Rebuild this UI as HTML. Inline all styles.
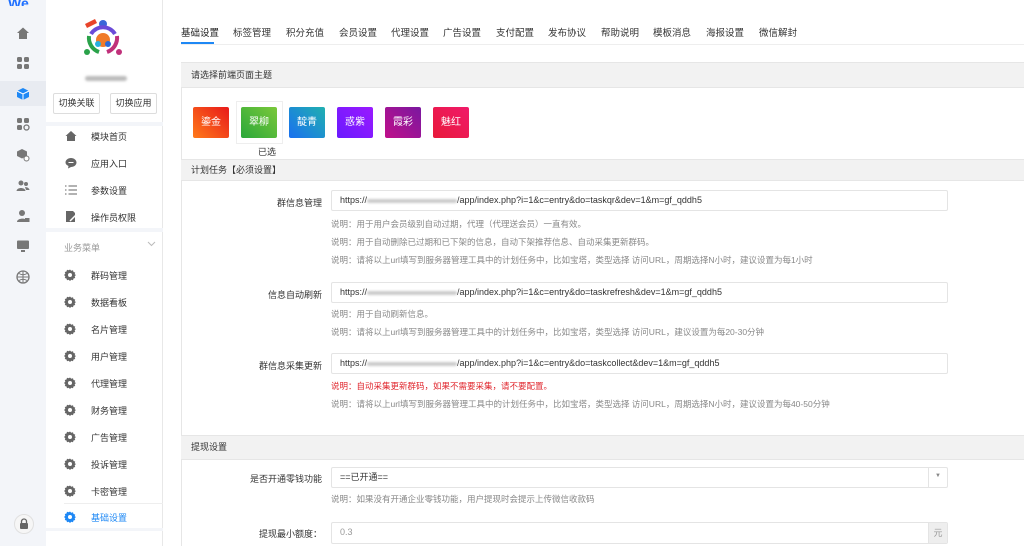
<!DOCTYPE html>
<html><head><meta charset="utf-8"><style>
*{margin:0;padding:0;box-sizing:border-box}
body{width:1024px;height:546px;overflow:hidden;background:#fff;font-family:"Liberation Sans","Noto Sans CJK SC",sans-serif;font-size:9px;color:#333;position:relative}
.a{position:absolute}
.rail{left:0;top:0;width:46px;height:546px;background:#f3f5f9}
.ri{position:absolute;left:16px;width:14px;height:14px}
.side{left:46px;top:0;width:117px;height:546px;background:#fff;border-right:1px solid #e8e8e8}
.mi{position:absolute;left:91px;font-size:9px;color:#333;white-space:nowrap}
.gear{position:absolute;left:64px;width:12px;height:12px}
.btn{position:absolute;top:93px;height:21px;width:47px;border:1px solid #ddd;border-radius:2px;font-size:9px;line-height:19px;text-align:center;color:#333}
.tab{position:absolute;top:25px;font-size:9.5px;color:#333;white-space:nowrap}
.hd{position:absolute;left:181px;right:0;background:#f2f2f2;border-top:1px solid #e6e6e6;border-bottom:1px solid #e6e6e6;padding-left:10px;font-size:9px;color:#333}
.th{position:absolute;top:107px;width:36px;height:31px;color:#fff;font-size:10px;line-height:31px;text-align:center;border-radius:2px}
.lab{position:absolute;right:702px;font-size:9px;color:#333;white-space:nowrap}
.inp{position:absolute;left:331px;width:617px;height:21px;border:1px solid #e4e4e4;border-radius:2px;padding-left:8px;line-height:19px;font-size:9px;color:#333;white-space:nowrap}
.blur{display:inline-block;width:90px;height:4px;background:#ccc;vertical-align:middle;border-radius:2px;filter:blur(1px)}
.nt{position:absolute;left:331px;font-size:8.5px;color:#888;white-space:nowrap}
</style></head><body>
<div class="a rail"></div>
<div class="a" style="left:0;top:0;width:40px;height:6px;overflow:hidden"><div style="margin-top:-5px;color:#1e6fff;font-weight:bold;font-size:14px;padding-left:8px">We</div></div>
<div class="a" style="left:0;top:81px;width:46px;height:25px;background:#e8ebf1"></div>
<svg class="ri" style="top:26px" viewBox="0 0 14 14"><path d="M1 7L7 1.5 13 7H11V13H3V7Z" fill="#777"/></svg>
<svg class="ri" style="top:56px" viewBox="0 0 14 14"><rect x="1" y="1" width="5" height="5" rx="1.5" fill="#777"/><rect x="8" y="1" width="5" height="5" rx="1.5" fill="#777"/><rect x="1" y="8" width="5" height="5" rx="1.5" fill="#777"/><rect x="8" y="8" width="5" height="5" rx="1.5" fill="#777"/></svg>
<svg class="ri" style="top:87px" viewBox="0 0 14 14"><path d="M7 1L13 4V10L7 13 1 10V4Z" fill="#1e88f5"/><path d="M1 4L7 7 13 4M7 7V13" stroke="#fff" stroke-width="1" fill="none"/></svg>
<svg class="ri" style="top:117px" viewBox="0 0 14 14"><rect x="1" y="1" width="5" height="5" rx="1.5" fill="#777"/><rect x="8" y="1" width="5" height="5" rx="1.5" fill="#777"/><rect x="1" y="8" width="5" height="5" rx="1.5" fill="#777"/><circle cx="10.5" cy="10.5" r="2.5" fill="none" stroke="#777" stroke-width="1.3"/></svg>
<svg class="ri" style="top:148px" viewBox="0 0 14 14"><path d="M6 1L11 3.5V8L6 10.5 1 8V3.5Z" fill="#777"/><circle cx="10.5" cy="10.5" r="2.5" fill="#fff" stroke="#777"/></svg>
<svg class="ri" style="top:179px" viewBox="0 0 14 14"><circle cx="5" cy="4" r="2.5" fill="#777"/><path d="M0.5 12C1 8 9 8 9.5 12Z" fill="#777"/><circle cx="10" cy="5" r="2" fill="#777"/><path d="M9 8C12 8 13.5 10 13.5 11H10Z" fill="#777"/></svg>
<svg class="ri" style="top:209px" viewBox="0 0 14 14"><circle cx="6" cy="4" r="3" fill="#777"/><path d="M1 13C1 9 10 9 10 11V13Z" fill="#777"/><rect x="9" y="9" width="4.5" height="4" fill="#777"/></svg>
<svg class="ri" style="top:239px" viewBox="0 0 14 14"><rect x="1" y="1.5" width="12" height="8.5" rx="1" fill="#777"/><rect x="5" y="11" width="4" height="2" fill="#777"/></svg>
<svg class="ri" style="top:270px" viewBox="0 0 14 14"><circle cx="7" cy="7" r="6" fill="none" stroke="#777" stroke-width="1.3"/><path d="M1 7H13M7 1V13M3 3.5Q7 6 11 3.5M3 10.5Q7 8 11 10.5" stroke="#777" fill="none"/></svg>
<div class="a" style="left:14px;top:514px;width:20px;height:20px;border-radius:50%;border:1px solid #e0e0e0;background:#f6f6f6"></div>
<svg class="a" style="left:19px;top:518px" width="10" height="11" viewBox="0 0 10 11"><path d="M2.5 5V3.5a2.5 2.5 0 0 1 5 0V5" stroke="#666" stroke-width="1.3" fill="none"/><rect x="1" y="5" width="8" height="6" rx="1" fill="#666"/></svg>

<div class="a side"></div>
<div class="a" style="left:46px;top:122px;width:117px;height:4px;background:#f3f5f9"></div>
<div class="a" style="left:46px;top:228px;width:117px;height:4px;background:#f3f5f9"></div>
<svg class="a" style="left:81px;top:18px" width="44" height="42" viewBox="0 0 44 42"><path d="M4 6L14 1 16 5 6 10Z" fill="#e8442a"/><circle cx="22" cy="6" r="4" fill="#3a66d8"/><path d="M10 16A14 14 0 0 1 34 16" stroke="#6b4bd8" stroke-width="4" fill="none"/><path d="M8 18A15 15 0 0 0 18 34" stroke="#2aa24a" stroke-width="4" fill="none"/><path d="M36 18A15 15 0 0 1 26 34" stroke="#c0307a" stroke-width="4" fill="none"/><circle cx="22" cy="22" r="7" fill="#f07a2a"/><circle cx="17" cy="26" r="3" fill="#28b0e0"/><circle cx="27" cy="26" r="3" fill="#2a6ad8"/><circle cx="6" cy="34" r="3" fill="#2aa24a"/><circle cx="38" cy="34" r="3" fill="#c0307a"/></svg>
<div class="a" style="left:85px;top:76px;width:42px;height:5px;background:#bbb;border-radius:3px;filter:blur(1.2px)"></div>
<div class="btn" style="left:53px">切换关联</div>
<div class="btn" style="left:110px">切换应用</div>
<svg class="a" style="left:65px;top:130px" width="12" height="11" viewBox="0 0 12 11"><path d="M0.5 6L6 1 11.5 6H10V11H2V6Z" fill="#666"/></svg>
<div class="mi" style="top:130px">模块首页</div>
<svg class="a" style="left:65px;top:157px" width="12" height="12" viewBox="0 0 12 12"><path d="M6 1C9 1 11.5 3 11.5 5.5S9 10 6 10L3 11.5 3.5 9C1.5 8 0.5 7 0.5 5.5 0.5 3 3 1 6 1Z" fill="#666"/><path d="M3.5 5.5H8.5" stroke="#fff"/></svg>
<div class="mi" style="top:157px">应用入口</div>
<svg class="a" style="left:65px;top:184px" width="12" height="12" viewBox="0 0 12 12"><path d="M0 2H1.5M3.5 2H12M0 6H1.5M3.5 6H12M0 10H1.5M3.5 10H12" stroke="#666" stroke-width="1"/></svg>
<div class="mi" style="top:184px">参数设置</div>
<svg class="a" style="left:65px;top:210px" width="12" height="13" viewBox="0 0 12 13"><path d="M1 1H8L10 3V12H1Z" fill="#666"/><path d="M5 11L10.5 5.5" stroke="#fff" stroke-width="1.5"/></svg>
<div class="mi" style="top:211px">操作员权限</div>
<div class="mi" style="top:241px;left:64px;color:#999">业务菜单</div>
<svg class="a" style="left:147px;top:241px" width="9" height="6" viewBox="0 0 9 6"><path d="M1 1L4.5 4.5 8 1" stroke="#bbb" fill="none"/></svg>
<svg width="0" height="0" style="position:absolute"><defs><g id="g"><path d="M6 0.5L7.3 1.8 9 1.3 9.5 3 11.2 3.5 10.7 5.2 12 6 10.7 7.3 11.2 9 9.5 9.5 9 11.2 7.3 10.7 6 12 4.7 10.7 3 11.2 2.5 9.5 0.8 9 1.3 7.3 0 6 1.3 4.7 0.8 3 2.5 2.5 3 0.8 4.7 1.3Z"/><circle cx="6" cy="6" r="2" fill="#fff"/></g></defs></svg>
<svg class="gear" style="top:269px;fill:#666"><use href="#g"/></svg><div class="mi" style="top:269px">群码管理</div>
<svg class="gear" style="top:296px;fill:#666"><use href="#g"/></svg><div class="mi" style="top:296px">数据看板</div>
<svg class="gear" style="top:323px;fill:#666"><use href="#g"/></svg><div class="mi" style="top:323px">名片管理</div>
<svg class="gear" style="top:350px;fill:#666"><use href="#g"/></svg><div class="mi" style="top:350px">用户管理</div>
<svg class="gear" style="top:377px;fill:#666"><use href="#g"/></svg><div class="mi" style="top:377px">代理管理</div>
<svg class="gear" style="top:404px;fill:#666"><use href="#g"/></svg><div class="mi" style="top:404px">财务管理</div>
<svg class="gear" style="top:431px;fill:#666"><use href="#g"/></svg><div class="mi" style="top:431px">广告管理</div>
<svg class="gear" style="top:458px;fill:#666"><use href="#g"/></svg><div class="mi" style="top:458px">投诉管理</div>
<svg class="gear" style="top:485px;fill:#666"><use href="#g"/></svg><div class="mi" style="top:485px">卡密管理</div>
<div class="a" style="left:64px;top:503px;width:99px;height:1px;background:#eee"></div>
<svg class="gear" style="top:511px;fill:#1e88f5"><use href="#g"/></svg><div class="mi" style="top:511px;color:#1e88f5">基础设置</div>
<div class="a" style="left:46px;top:528px;width:117px;height:3px;background:#f3f5f9"></div>

<div class="tab" style="left:181px;color:#222">基础设置</div>
<div class="tab" style="left:233px">标签管理</div>
<div class="tab" style="left:286px">积分充值</div>
<div class="tab" style="left:339px">会员设置</div>
<div class="tab" style="left:391px">代理设置</div>
<div class="tab" style="left:443px">广告设置</div>
<div class="tab" style="left:496px">支付配置</div>
<div class="tab" style="left:548px">发布协议</div>
<div class="tab" style="left:601px">帮助说明</div>
<div class="tab" style="left:653px">模板消息</div>
<div class="tab" style="left:706px">海报设置</div>
<div class="tab" style="left:759px">微信解封</div>
<div class="a" style="left:181px;top:44px;right:0;height:1px;background:#eee"></div>
<div class="a" style="left:181px;top:42px;width:33px;height:2px;background:#1e88f5"></div>

<div class="a" style="left:181px;top:62px;right:0;height:484px;border-left:1px solid #e6e6e6"></div>
<div class="hd" style="top:62px;height:26px;line-height:24px">请选择前端页面主题</div>
<div class="a" style="left:236px;top:101px;width:47px;height:43px;border:1px solid #eee"></div>
<div class="th" style="left:193px;background:linear-gradient(45deg,#ff7a1a,#e81a1a)">鎏金</div>
<div class="th" style="left:241px;background:linear-gradient(45deg,#2aa83a,#7ac83a)">翠柳</div>
<div class="th" style="left:289px;background:linear-gradient(45deg,#1a70f0,#20b0b0)">靛青</div>
<div class="th" style="left:337px;background:linear-gradient(45deg,#6a1aff,#9a1aff)">惑紫</div>
<div class="th" style="left:385px;background:linear-gradient(45deg,#c0108a,#7a18a0)">霞彩</div>
<div class="th" style="left:433px;background:linear-gradient(45deg,#e81a3a,#f01a6a)">魅红</div>
<div class="a" style="left:258px;top:145px;font-size:9px">已选</div>
<div class="hd" style="top:159px;height:22px;line-height:20px">计划任务【必须设置】</div>

<div class="lab" style="top:196px">群信息管理</div>
<div class="inp" style="top:190px">https://<span class="blur"></span>/app/index.php?i=1&amp;c=entry&amp;do=taskqr&amp;dev=1&amp;m=gf_qddh5</div>
<div class="nt" style="top:218px">说明：用于用户会员级别自动过期，代理（代理送会员）一直有效。</div>
<div class="nt" style="top:236px">说明：用于自动删除已过期和已下架的信息，自动下架推荐信息、自动采集更新群码。</div>
<div class="nt" style="top:254px">说明：请将以上url填写到服务器管理工具中的计划任务中，比如宝塔，类型选择 访问URL，周期选择N小时，建议设置为每1小时</div>

<div class="lab" style="top:288px">信息自动刷新</div>
<div class="inp" style="top:282px">https://<span class="blur"></span>/app/index.php?i=1&amp;c=entry&amp;do=taskrefresh&amp;dev=1&amp;m=gf_qddh5</div>
<div class="nt" style="top:308px">说明：用于自动刷新信息。</div>
<div class="nt" style="top:326px">说明：请将以上url填写到服务器管理工具中的计划任务中，比如宝塔，类型选择 访问URL，建议设置为每20-30分钟</div>

<div class="lab" style="top:359px">群信息采集更新</div>
<div class="inp" style="top:353px">https://<span class="blur"></span>/app/index.php?i=1&amp;c=entry&amp;do=taskcollect&amp;dev=1&amp;m=gf_qddh5</div>
<div class="nt" style="top:380px;color:#e0262d">说明：自动采集更新群码，如果不需要采集，请不要配置。</div>
<div class="nt" style="top:398px">说明：请将以上url填写到服务器管理工具中的计划任务中，比如宝塔，类型选择 访问URL，周期选择N小时，建议设置为每40-50分钟</div>

<div class="hd" style="top:435px;height:25px;line-height:23px">提现设置</div>
<div class="lab" style="top:472px">是否开通零钱功能</div>
<div class="inp" style="top:467px">==已开通==</div>
<div class="a" style="left:928px;top:468px;width:1px;height:19px;background:#e4e4e4"></div>
<div class="a" style="left:935px;top:473px;font-size:6px;color:#888">▼</div>
<div class="nt" style="top:493px">说明：如果没有开通企业零钱功能，用户提现时会提示上传微信收款码</div>
<div class="lab" style="top:527px">提现最小额度：</div>
<div class="inp" style="top:522px;color:#999;height:22px">0.3</div>
<div class="a" style="left:928px;top:523px;width:19px;height:20px;background:#eee;border-left:1px solid #e4e4e4;font-size:9px;color:#999;text-align:center;line-height:20px">元</div>
</body></html>
